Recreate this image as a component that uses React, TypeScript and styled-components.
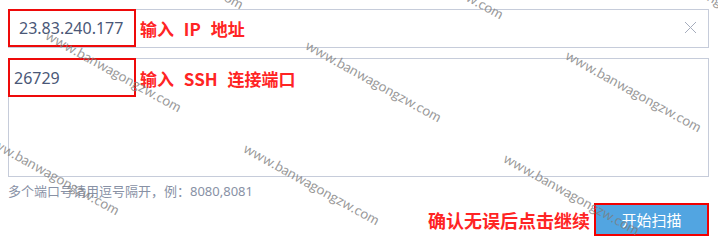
import * as React from 'react';
import styled, {createGlobalStyle} from 'styled-components';

const GlobalStyle = createGlobalStyle`
    html, body {
        margin: 0;
        padding: 0;
        background: #ffffff;
    }
    body {
        font-family: "Noto Sans", "Noto Sans CJK SC", sans-serif;
    }
`;

const StyledPage = styled.div`
    position: relative;
    width: 718px;
    height: 246px;
    overflow: hidden;
    box-sizing: border-box;
    padding: 9px 9px 0 8px;
    display: flex;
    flex-direction: column;
`;

const StyledField = styled.div<{$tall?: boolean}>`
    display: flex;
    flex-direction: row;
    align-items: ${({$tall}) => ($tall ? 'flex-start' : 'center')};
    height: ${({$tall}) => ($tall ? '119px' : '39px')};
    margin-top: ${({$tall}) => ($tall ? '10px' : '0')};
    box-sizing: border-box;
    border: 1px solid #c6ccda;
    background: #ffffff;
`;

const StyledHighlight = styled.div<{$inset: number}>`
    display: flex;
    align-items: center;
    width: 128px;
    height: ${({$inset}) => ($inset > 6 ? '38px' : '39px')};
    margin: -1px 0 0 -1px;
    box-sizing: border-box;
    border: 2px solid #ee0a0a;
    padding-left: ${({$inset}) => $inset}px;
    font-size: 16px;
    color: #4a5777;
`;

const StyledNote = styled.span<{$size?: number}>`
    margin-left: 4px;
    font-family: "Noto Sans CJK SC", sans-serif;
    font-weight: 700;
    font-size: ${({$size}) => $size || 17}px;
    color: #ff2424;
    word-spacing: 6px;
    white-space: nowrap;
`;

const StyledFieldNote = styled(StyledNote)`
    align-self: center;
`;

const StyledTallNote = styled(StyledNote)`
    line-height: 39px;
`;

const Spacer = styled.div`
    flex: 1;
`;

const StyledClear = styled.svg`
    width: 13px;
    height: 13px;
    margin-right: 11px;
    margin-top: -2px;
`;

const StyledHelp = styled.div`
    margin-top: 4px;
    font-size: 13px;
    line-height: 20px;
    color: #8891a5;
    white-space: nowrap;
`;

const StyledActions = styled.div`
    display: flex;
    flex-direction: row;
    justify-content: flex-end;
    align-items: center;
    margin-top: 2px;
`;

const StyledButton = styled.button`
    width: 115px;
    height: 33px;
    margin-left: 4px;
    box-sizing: border-box;
    border: 2px solid #f20000;
    background: #52a5e1;
    color: #ffffff;
    font-family: "Noto Sans CJK SC", sans-serif;
    font-size: 15px;
    padding: 0;
    cursor: pointer;
`;

const StyledWatermarks = styled.div`
    position: absolute;
    inset: 0;
    pointer-events: none;
`;

const StyledWatermark = styled.span`
    position: absolute;
    transform-origin: 0 0;
    transform: rotate(29deg);
    font-family: Lato, "Open Sans", sans-serif;
    font-size: 14px;
    line-height: 14px;
    color: rgba(125, 125, 125, 0.78);
    white-space: nowrap;
`;

const watermarkSpots = () => {
    const spots: {x: number; y: number}[] = [];
    for (let row = -1; row <= 2; row++) {
        for (let col = -1; col <= 3; col++) {
            const x = 50 + 260 * col - 62 * row;
            const y = 28 + 10 * col + 103 * row;
            if (x > -160 && x < 720 && y > -90 && y < 246) {
                spots.push({x, y});
            }
        }
    }
    return spots;
};

const App = () => {
    return (
        <>
            <GlobalStyle />
            <StyledPage>
                <StyledField>
                    <StyledHighlight $inset={9}>23.83.240.177</StyledHighlight>
                    <StyledFieldNote>输入 IP 地址</StyledFieldNote>
                    <Spacer />
                    <StyledClear viewBox="0 0 13 13">
                        <path d="M1 1 L12 12 M12 1 L1 12" stroke="#a6adbd" strokeWidth="1" fill="none" />
                    </StyledClear>
                </StyledField>
                <StyledField $tall>
                    <StyledHighlight $inset={4}>26729</StyledHighlight>
                    <StyledTallNote>输入 SSH 连接端口</StyledTallNote>
                </StyledField>
                <StyledHelp>多个端口号请用逗号隔开，例：8080,8081</StyledHelp>
                <StyledActions>
                    <StyledNote $size={18}>确认无误后点击继续</StyledNote>
                    <StyledButton>开始扫描</StyledButton>
                </StyledActions>
                <StyledWatermarks>
                    {watermarkSpots().map((spot) => (
                        <StyledWatermark key={`${spot.x}-${spot.y}`} style={{left: spot.x, top: spot.y}}>
                            www.banwagongzw.com
                        </StyledWatermark>
                    ))}
                </StyledWatermarks>
            </StyledPage>
        </>
    );
};

export default App;
